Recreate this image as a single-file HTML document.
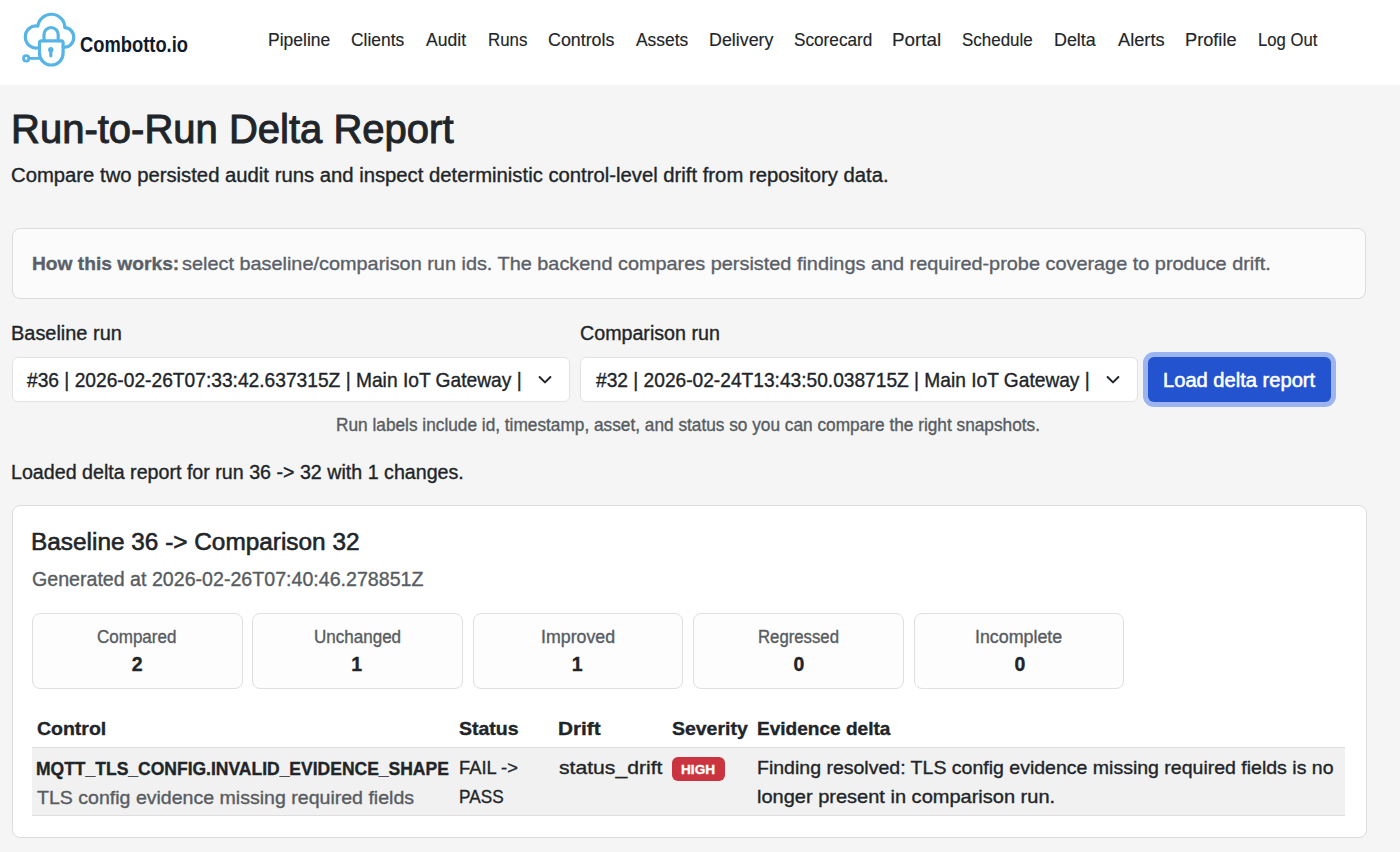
<!DOCTYPE html>
<html><head><meta charset="utf-8"><title>Run-to-Run Delta Report</title>
<style>
html,body{margin:0;padding:0}
body{width:1400px;height:852px;overflow:hidden;position:relative;background:#f5f5f5;font-family:"Liberation Sans",sans-serif}
.bx{position:absolute;box-sizing:border-box;border:1px solid #dcdcdc;border-radius:8px}
.t{position:absolute;white-space:nowrap;line-height:1;transform-origin:0 0;-webkit-text-stroke:0.35px currentColor}
.bl{display:inline-block;width:0;height:0;vertical-align:baseline}
</style></head><body>
<div style="position:absolute;left:0;top:0;width:1400px;height:85px;background:#fff"></div>
<svg style="position:absolute;left:0;top:0" width="90" height="85" viewBox="0 0 90 85">
<g fill="none" stroke="#57b4e6" stroke-width="3.2" stroke-linecap="round" stroke-linejoin="round">
<path d="M38,47.76 A10.5,11 0 1 1 37.8,26.2 A13.6,13.6 0 0 1 64.9,27.6 A9,9.8 0 1 1 63.1,47.03"/>
<path d="M44,40.8 L44,34.6 A7.1,7.1 0 0 1 58.2,34.6 L58.2,40.8"/>
<path d="M41.5,40.8 L61.1,40.8 Q63.1,40.8 63.1,42.8 L63.1,53.2 A11.8,11.8 0 0 1 39.5,53.2 L39.5,42.8 Q39.5,40.8 41.5,40.8 Z"/>
<line x1="50.8" y1="50.5" x2="50.8" y2="55.8" stroke-width="3.2"/>
<circle cx="26.2" cy="58.4" r="2.7" stroke-width="2.7"/>
<line x1="29" y1="58.4" x2="39" y2="58.4" stroke-width="2.8"/>
</g>
<circle cx="50.8" cy="49.8" r="2.7" fill="#57b4e6"/>
</svg>
<div class="bx" style="left:12px;top:228px;width:1354px;height:71px;background:#fbfbfc"></div>
<div class="bx" style="left:12px;top:357px;width:558px;height:45px;background:#fff;border-radius:6px;border-color:#e2e2e2"></div>
<div class="bx" style="left:580px;top:357px;width:558px;height:45px;background:#fff;border-radius:6px;border-color:#e2e2e2"></div>
<svg style="position:absolute;left:537px;top:372px" width="16" height="16" viewBox="0 0 16 16"><path d="M2.6,5 L8,10.4 L13.4,5" fill="none" stroke="#212529" stroke-width="2" stroke-linecap="round" stroke-linejoin="round"/></svg>
<svg style="position:absolute;left:1105px;top:372px" width="16" height="16" viewBox="0 0 16 16"><path d="M2.6,5 L8,10.4 L13.4,5" fill="none" stroke="#212529" stroke-width="2" stroke-linecap="round" stroke-linejoin="round"/></svg>
<div style="position:absolute;left:1148px;top:357px;width:183px;height:45px;border-radius:6px;background:#2353cf;box-shadow:0 0 0 5px #9cb4ef"></div>
<div class="bx" style="left:12px;top:505px;width:1355px;height:333px;background:#fff"></div>
<div class="bx" style="left:32px;top:612.5px;width:210.6px;height:76px;background:#fdfdfd;border-color:#e0e0e0"></div>
<div class="bx" style="left:252.4px;top:612.5px;width:210.6px;height:76px;background:#fdfdfd;border-color:#e0e0e0"></div>
<div class="bx" style="left:472.8px;top:612.5px;width:210.6px;height:76px;background:#fdfdfd;border-color:#e0e0e0"></div>
<div class="bx" style="left:693.2px;top:612.5px;width:210.6px;height:76px;background:#fdfdfd;border-color:#e0e0e0"></div>
<div class="bx" style="left:913.6px;top:612.5px;width:210.6px;height:76px;background:#fdfdfd;border-color:#e0e0e0"></div>
<div style="position:absolute;left:32px;top:747px;width:1313px;height:69px;background:#f1f1f1;border-top:1px solid #dedede;border-bottom:1px solid #dedede;box-sizing:border-box"></div>
<div style="position:absolute;left:672px;top:756.5px;width:52.5px;height:24px;border-radius:6px;background:#c93440"></div>
<div class="t" id="logo" style="left:79.91px;top:34.7px;font-size:21.38px;-webkit-text-stroke:0px currentColor;font-weight:700;color:#0f1b2c;transform:scaleX(0.8584)">Combotto.io</div>
<div class="t" id="n1" style="left:267.5px;top:31.6px;font-size:17.45px;-webkit-text-stroke:0.15px currentColor;font-weight:400;color:#212529;transform:scaleX(1.0034)">Pipeline</div>
<div class="t" id="n2" style="left:351.2px;top:31.6px;font-size:17.45px;-webkit-text-stroke:0.15px currentColor;font-weight:400;color:#212529;transform:scaleX(0.9977)">Clients</div>
<div class="t" id="n3" style="left:426.4px;top:31.6px;font-size:17.45px;-webkit-text-stroke:0.15px currentColor;font-weight:400;color:#212529;transform:scaleX(1.0067)">Audit</div>
<div class="t" id="n4" style="left:487.65px;top:31.6px;font-size:17.45px;-webkit-text-stroke:0.15px currentColor;font-weight:400;color:#212529;transform:scaleX(0.966)">Runs</div>
<div class="t" id="n5" style="left:548.18px;top:31.6px;font-size:17.45px;-webkit-text-stroke:0.15px currentColor;font-weight:400;color:#212529;transform:scaleX(1.0226)">Controls</div>
<div class="t" id="n6" style="left:636.0px;top:31.6px;font-size:17.45px;-webkit-text-stroke:0.15px currentColor;font-weight:400;color:#212529;transform:scaleX(0.9971)">Assets</div>
<div class="t" id="n7" style="left:708.57px;top:31.6px;font-size:17.45px;-webkit-text-stroke:0.15px currentColor;font-weight:400;color:#212529;transform:scaleX(1.0225)">Delivery</div>
<div class="t" id="n8" style="left:794.31px;top:31.6px;font-size:17.45px;-webkit-text-stroke:0.15px currentColor;font-weight:400;color:#212529;transform:scaleX(0.9854)">Scorecard</div>
<div class="t" id="n9" style="left:892.49px;top:31.6px;font-size:17.45px;-webkit-text-stroke:0.15px currentColor;font-weight:400;color:#212529;transform:scaleX(1.0808)">Portal</div>
<div class="t" id="n10" style="left:962.32px;top:31.6px;font-size:17.45px;-webkit-text-stroke:0.15px currentColor;font-weight:400;color:#212529;transform:scaleX(0.9724)">Schedule</div>
<div class="t" id="n11" style="left:1053.57px;top:31.6px;font-size:17.45px;-webkit-text-stroke:0.15px currentColor;font-weight:400;color:#212529;transform:scaleX(1.0244)">Delta</div>
<div class="t" id="n12" style="left:1117.6px;top:31.6px;font-size:17.45px;-webkit-text-stroke:0.15px currentColor;font-weight:400;color:#212529;transform:scaleX(1.0458)">Alerts</div>
<div class="t" id="n13" style="left:1185.14px;top:31.6px;font-size:17.45px;-webkit-text-stroke:0.15px currentColor;font-weight:400;color:#212529;transform:scaleX(1.043)">Profile</div>
<div class="t" id="n14" style="left:1257.56px;top:31.6px;font-size:17.45px;-webkit-text-stroke:0.15px currentColor;font-weight:400;color:#212529;transform:scaleX(0.9563)">Log Out</div>
<div class="t" id="title" style="left:10.57px;top:108.9px;font-size:40.0px;-webkit-text-stroke:1.0px currentColor;font-weight:400;color:#212529;transform:scaleX(1.0002)">Run-to-Run Delta Report</div>
<div class="t" id="sub" style="left:10.97px;top:166.1px;font-size:19.78px;font-weight:400;color:#212529;transform:scaleX(1.0255)">Compare two persisted audit runs and inspect deterministic control-level drift from repository data.</div>
<div class="t" id="infob" style="left:31.58px;top:254.9px;font-size:18.91px;font-weight:700;color:#5a6067;transform:scaleX(1.0156)">How this works:</div>
<div class="t" id="infor" style="left:182.47px;top:254.9px;font-size:18.91px;font-weight:400;color:#5a6067;transform:scaleX(1.0511)">select baseline/comparison run ids. The backend compares persisted findings and required-probe coverage to produce drift.</div>
<div class="t" id="lab1" style="left:10.67px;top:323.6px;font-size:19.64px;font-weight:400;color:#212529;transform:scaleX(1.0156)">Baseline run</div>
<div class="t" id="lab2" style="left:579.9px;top:323.6px;font-size:19.64px;font-weight:400;color:#212529;transform:scaleX(1.0016)">Comparison run</div>
<div class="t" id="sel1" style="left:27.2px;top:370.6px;font-size:19.35px;font-weight:400;color:#212529;transform:scaleX(0.992)">#36 | 2026-02-26T07:33:42.637315Z | Main IoT Gateway |</div>
<div class="t" id="sel2" style="left:596.0px;top:370.6px;font-size:19.35px;font-weight:400;color:#212529;transform:scaleX(0.9902)">#32 | 2026-02-24T13:43:50.038715Z | Main IoT Gateway |</div>
<div class="t" id="btn" style="left:1162.92px;top:370px;font-size:20.36px;-webkit-text-stroke:0.55px currentColor;font-weight:400;color:#ffffff;transform:scaleX(0.9882)">Load delta report</div>
<div class="t" id="help" style="left:336.41px;top:416.5px;font-size:17.45px;font-weight:400;color:#575c61;transform:scaleX(0.9895)">Run labels include id, timestamp, asset, and status so you can compare the right snapshots.</div>
<div class="t" id="loaded" style="left:10.7px;top:462.7px;font-size:19.64px;font-weight:400;color:#212529;transform:scaleX(1.0013)">Loaded delta report for run 36 -&gt; 32 with 1 changes.</div>
<div class="t" id="ch" style="left:30.93px;top:529.7px;font-size:24.73px;-webkit-text-stroke:0.6px currentColor;font-weight:400;color:#212529;transform:scaleX(0.9859)">Baseline 36 -&gt; Comparison 32</div>
<div class="t" id="gen" style="left:31.52px;top:568.8px;font-size:20.07px;font-weight:400;color:#575c61;transform:scaleX(0.9775)">Generated at 2026-02-26T07:40:46.278851Z</div>
<div class="t" id="s1l" style="left:97.22px;top:628.7px;font-size:17.45px;font-weight:400;color:#575c61;transform:scaleX(0.9751)">Compared</div>
<div class="t" id="s2l" style="left:314.03px;top:628.7px;font-size:17.45px;font-weight:400;color:#575c61;transform:scaleX(0.9762)">Unchanged</div>
<div class="t" id="s3l" style="left:541.07px;top:628.7px;font-size:17.45px;font-weight:400;color:#575c61;transform:scaleX(1.0193)">Improved</div>
<div class="t" id="s4l" style="left:758.16px;top:628.7px;font-size:17.45px;font-weight:400;color:#575c61;transform:scaleX(0.9598)">Regressed</div>
<div class="t" id="s5l" style="left:975.46px;top:628.7px;font-size:17.45px;font-weight:400;color:#575c61;transform:scaleX(1.0221)">Incomplete</div>
<div class="t" id="s1n" style="left:131.85px;top:654.7px;font-size:19.49px;font-weight:700;color:#212529;transform:scaleX(1.0)">2</div>
<div class="t" id="s2n" style="left:351.35px;top:654.7px;font-size:19.49px;font-weight:700;color:#212529;transform:scaleX(1.0)">1</div>
<div class="t" id="s3n" style="left:571.85px;top:654.7px;font-size:19.49px;font-weight:700;color:#212529;transform:scaleX(1.0)">1</div>
<div class="t" id="s4n" style="left:793.55px;top:654.7px;font-size:19.49px;font-weight:700;color:#212529;transform:scaleX(1.0)">0</div>
<div class="t" id="s5n" style="left:1014.5px;top:654.7px;font-size:19.49px;font-weight:700;color:#212529;transform:scaleX(1.0)">0</div>
<div class="t" id="th1" style="left:36.58px;top:719.5px;font-size:18.91px;font-weight:700;color:#212529;transform:scaleX(1.0298)">Control</div>
<div class="t" id="th2" style="left:459.08px;top:719.5px;font-size:18.91px;font-weight:700;color:#212529;transform:scaleX(1.0324)">Status</div>
<div class="t" id="th3" style="left:558.28px;top:719.5px;font-size:18.91px;font-weight:700;color:#212529;transform:scaleX(1.0971)">Drift</div>
<div class="t" id="th4" style="left:671.89px;top:719.5px;font-size:18.91px;font-weight:700;color:#212529;transform:scaleX(1.0292)">Severity</div>
<div class="t" id="th5" style="left:757.39px;top:719.5px;font-size:18.91px;font-weight:700;color:#212529;transform:scaleX(1.0077)">Evidence delta</div>
<div class="t" id="ctl" style="left:36.49px;top:759.5px;font-size:18.91px;font-weight:700;color:#212529;transform:scaleX(0.9254)">MQTT_TLS_CONFIG.INVALID_EVIDENCE_SHAPE</div>
<div class="t" id="ctl2" style="left:36.89px;top:788.8px;font-size:18.91px;font-weight:400;color:#575c61;transform:scaleX(1.034)">TLS config evidence missing required fields</div>
<div class="t" id="st1" style="left:458.55px;top:759.4px;font-size:18.91px;font-weight:400;color:#212529;transform:scaleX(0.969)">FAIL -&gt;</div>
<div class="t" id="st2" style="left:458.64px;top:788.4px;font-size:18.91px;font-weight:400;color:#212529;transform:scaleX(0.9095)">PASS</div>
<div class="t" id="drift" style="left:558.64px;top:759.4px;font-size:18.91px;font-weight:400;color:#212529;transform:scaleX(1.1183)">status_drift</div>
<div class="t" id="high" style="left:680.9px;top:763.3px;font-size:13.67px;font-weight:700;color:#ffffff;transform:scaleX(0.9998)">HIGH</div>
<div class="t" id="ev1" style="left:757.05px;top:759.4px;font-size:18.91px;font-weight:400;color:#212529;transform:scaleX(1.0318)">Finding resolved: TLS config evidence missing required fields is no</div>
<div class="t" id="ev2" style="left:757.33px;top:788.4px;font-size:18.91px;font-weight:400;color:#212529;transform:scaleX(1.0584)">longer present in comparison run.</div>
</body></html>
